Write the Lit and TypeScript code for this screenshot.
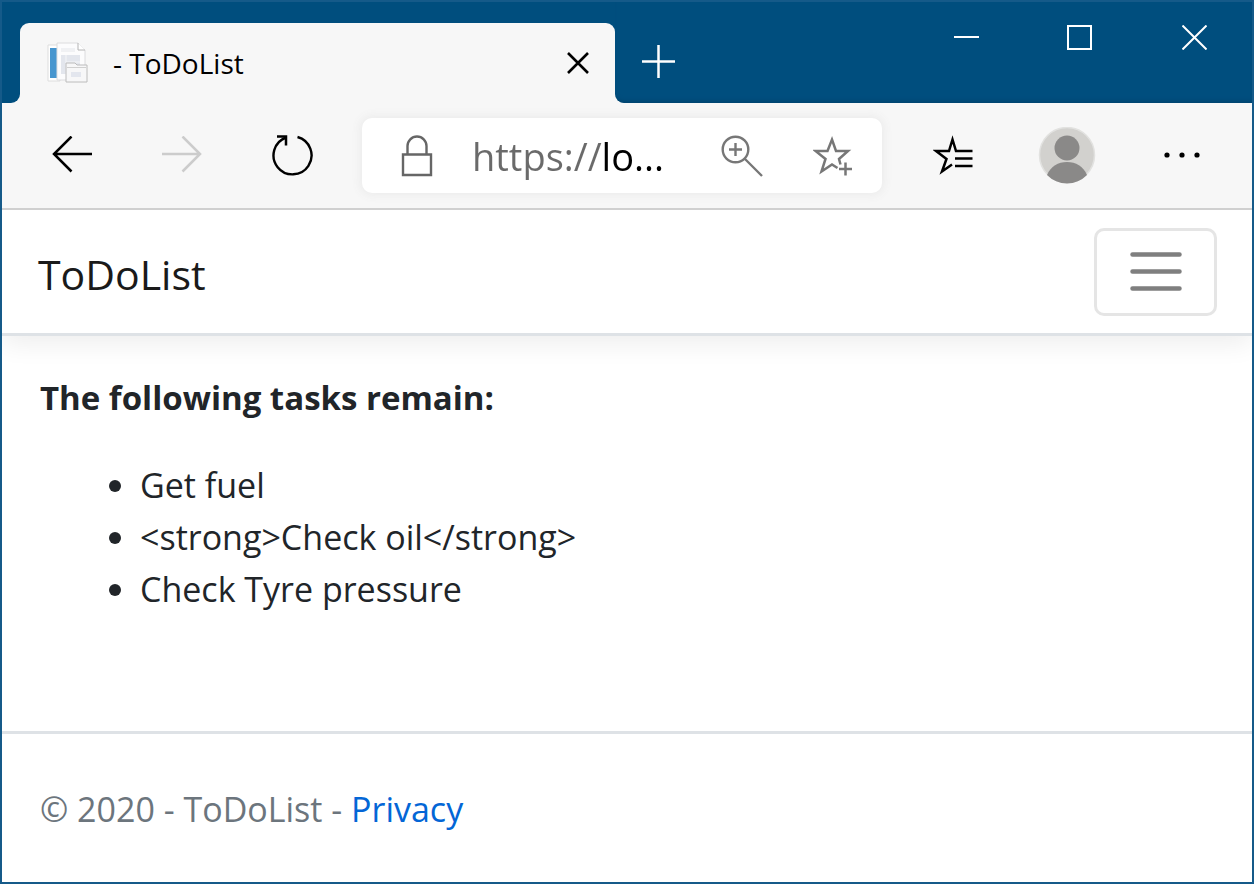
import { LitElement, html, css } from "lit";
import { customElement, state } from "lit/decorators.js";

@customElement("browser-chrome")
class BrowserChrome extends LitElement {
  static styles = css`
    :host { display: block; background: #f7f7f7; border-bottom: 2px solid #d0d0d0; }
    button { border: 0; margin: 0; padding: 0; background: none; display: flex; align-items: center; justify-content: center; }
    svg { display: block; }
    .titlebar { display: flex; height: 101px; }
    .edge { width: 18px; background: #004e7e; border-radius: 0 0 9px 0; }
    .tab-slot { flex: 0 1 595px; min-width: 0; display: flex; background: #004e7e; padding-top: 21px; box-sizing: border-box; }
    .tab { flex: 1; display: flex; align-items: center; background: #f7f7f7; border-radius: 9px 9px 0 0; padding: 0 26px; }
    .tab-title { flex: 1; margin-left: 25px; font-size: 28px; line-height: 40px; color: #000; white-space: nowrap; }
    .rest { flex: 1; display: flex; align-items: flex-start; background: #004e7e; border-radius: 0 0 0 9px; box-shadow: inset 0 -5px 5px -4px #00416a; }
    .new-tab { width: 86px; height: 80px; margin-top: 19px; }
    .controls { display: flex; margin-left: auto; }
    .controls button { width: 115px; height: 71px; }
    .toolbar { display: flex; align-items: center; height: 105px; padding: 0 14px 0 15px; }
    .nav { width: 110px; height: 75px; }
    .tool { width: 114px; height: 75px; }
    .address { flex: 1; min-width: 0; display: flex; align-items: center; height: 75px; margin: 0 14px 0 15px; padding: 0 24px 0 38px; box-sizing: border-box; background: #fff; border-radius: 10px; box-shadow: 0 0 10px 2px #ebebeb; }
    .url { flex: 1; min-width: 0; margin: 0 20px 0 38px; padding: 0; border: 0; outline: 0; font: 38px/56px "Open Sans", "Noto Sans", sans-serif; height: 56px; color: transparent; background: linear-gradient(90deg, #6a6a6a 130px, #000 130px); -webkit-background-clip: text; background-clip: text; }
    .inner { width: 91px; height: 60px; flex: none; }
    .inner + .inner { width: 51px; margin-left: 20px; }
  `;

  render() {
    return html`
      <div class="titlebar">
        <div class="edge"></div>
        <div class="tab-slot">
          <div class="tab">
            <svg width="42" height="42" viewBox="0 0 42 42" aria-hidden="true">
              <path d="M2 3H14V39H2Z" fill="#fff" stroke="#ddd" />
              <path d="M4 6H12V36H4Z" fill="#4796cf" />
              <path d="M11 1H32L39 8V38H11Z" fill="#fcfcfd" stroke="#dcdcde" />
              <path d="M32 1V8H39" fill="#fff" stroke="#b4b4b4" />
              <path d="M15 7H29M15 9H29" stroke="#e4e6ea" />
              <path d="M15 13H34V32H15Z" fill="#e3e6ed" />
              <path d="M20 13V32M20 20H34" stroke="#f5f6f8" />
              <path d="M20 21H29L31 23H41V40H20Z" fill="#f7f7f8" stroke="#bcbcbc" />
              <path d="M21 25.500H40" stroke="#d0d0d0" />
              <path d="M25 30H35V35H25Z" fill="#e3e6ee" />
            </svg>
            <span class="tab-title">- ToDoList</span>
            <button aria-label="Close tab">
              <svg width="22" height="22" viewBox="0 0 22 22"><path d="M1 1L21 21M21 1L1 21" stroke="#000" stroke-width="2.600" /></svg>
            </button>
          </div>
        </div>
        <div class="rest">
          <button class="new-tab" aria-label="New tab">
            <svg width="33" height="33" viewBox="0 0 33 33"><path d="M0 16.500H33M16.500 0V33" stroke="#fff" stroke-width="2.500" /></svg>
          </button>
          <div class="controls">
            <button aria-label="Minimize"><svg width="25" height="25" viewBox="0 0 25 25" overflow="visible"><path d="M2 12H27" stroke="#fff" stroke-width="2" /></svg></button>
            <button aria-label="Maximize"><svg width="25" height="25" viewBox="0 0 25 25"><path d="M1 1H24V24H1Z" fill="none" stroke="#fff" stroke-width="2" /></svg></button>
            <button aria-label="Close window"><svg width="25" height="25" viewBox="0 0 25 25"><path d="M.500 .500L24.500 24.500M24.500 .500L.500 24.500" stroke="#fff" stroke-width="2" /></svg></button>
          </div>
        </div>
      </div>
      <div class="toolbar">
        <button class="nav" aria-label="Back"><svg width="40" height="40" viewBox="0 0 40 40"><path d="M40 18H2M19.500 .500L2 18L19.500 35.500" fill="none" stroke="#000" stroke-width="2.500" /></svg></button>
        <button class="nav" aria-label="Forward" disabled><svg width="40" height="40" viewBox="0 0 40 40"><path d="M0 18H38M20.500 .500L38 18L20.500 35.500" fill="none" stroke="#ccc" stroke-width="2.500" /></svg></button>
        <button class="nav" aria-label="Refresh"><svg width="42" height="42" viewBox="0 0 42 42"><path d="M26.500 2A19 19 0 1 1 15 2.500" fill="none" stroke="#000" stroke-width="2.400" /><path d="M6 1.500H15V10.500" fill="none" stroke="#000" stroke-width="2.500" /></svg></button>
        <div class="address">
          <svg width="34" height="42" viewBox="0 0 34 42" aria-hidden="true"><path d="M3 19.500H31V40H3ZM7.500 19V11A9.500 9.500 0 0 1 26.500 11V19" fill="none" stroke="#666" stroke-width="2.400" /></svg>
          <input class="url" type="text" aria-label="Address" value="https://lo..." />
          <button class="inner" aria-label="Zoom"><svg width="42" height="42" viewBox="0 0 42 42"><circle cx="14.500" cy="14.500" r="12.800" fill="none" stroke="#777" stroke-width="2.400" /><path d="M24 24L41 41M8 14.500H21M14.500 8V21" stroke="#777" stroke-width="2.400" /></svg></button>
          <button class="inner" aria-label="Add to favorites"><svg width="40" height="42" viewBox="0 0 40 42"><path d="M24.500 33L19 29.500L8.500 36.500L12.500 24L2.500 16H14.500L19 4.500L23 16H35L26 24L27.500 29.500" fill="none" stroke="#777" stroke-width="2.500" /><path d="M26 34H39M32.500 27.500V40.500" stroke="#777" stroke-width="2.500" /></svg></button>
        </div>
        <button class="tool" aria-label="Favorites"><svg width="40" height="42" viewBox="0 0 40 42"><path d="M39.500 16H23L19.500 4.500L16 16H3L13.500 24L9 36.500L19 29.500" fill="none" stroke="#000" stroke-width="2.500" /><path d="M22 23.500H39.500M22 31H39.500" stroke="#000" stroke-width="2.500" /></svg></button>
        <button class="tool" aria-label="Profile"><svg width="58" height="58" viewBox="0 1 58 58"><circle cx="29" cy="29" r="27.500" fill="#d2d1ce" stroke="#e2e2e0" stroke-width="1.500" /><circle cx="29" cy="22" r="12.500" fill="#8a8988" /><path d="M9 49C13 40 20 36 29 36S45 40 49 49A28 28 0 0 1 9 49Z" fill="#8a8988" /></svg></button>
        <button class="tool" aria-label="Settings and more"><svg width="38" height="8" viewBox="0 0 38 8"><circle cx="5" cy="3" r="2.600" /><circle cx="20" cy="3" r="2.600" /><circle cx="35" cy="3" r="2.600" /></svg></button>
      </div>
    `;
  }
}

@customElement("app-root")
class AppRoot extends LitElement {
  static styles = css`
    :host { display: flex; flex-direction: column; box-sizing: border-box; min-height: 100vh; border: 2px solid #155a89; background: #fff; color: #212529; font-family: "Open Sans", "Noto Sans", sans-serif; font-size: 34px; line-height: 52px; }
    a { text-decoration: none; }
    .navbar { display: flex; align-items: center; justify-content: space-between; padding: 18px 35px 17px 36px; border-bottom: 3px solid #dee2e6; box-shadow: 0 8px 24px #00000012; clip-path: inset(0 0 -40px 0); }
    .brand { font-size: 41px; line-height: 64px; padding-top: 4px; color: #1a1a1a; }
    .toggler { display: flex; align-items: center; justify-content: center; width: 123px; height: 88px; padding: 0; background: #fff; border: 3px solid #e5e5e5; border-radius: 10px; }
    main { flex: 1; padding: 36px 38px; }
    p { margin: 0; font-size: 33px; font-weight: 700; }
    ul { margin: 35px 0 0; padding: 0 0 0 100px; }
    footer { padding: 49px 38px 47px; border-top: 3px solid #dee2e6; color: #6c757d; }
    footer a { color: #0366d6; }
  `;

  @state() private tasks = ["Get fuel", "<strong>Check oil</strong>", "Check Tyre pressure"];

  render() {
    return html`
      <browser-chrome></browser-chrome>
      <header class="navbar">
        <a class="brand" href="#">ToDoList</a>
        <button class="toggler" aria-label="Toggle navigation">
          <svg width="54" height="42" viewBox="0 0 54 42"><path d="M3.500 3.500H50.500M3.500 20.500H50.500M3.500 37.500H50.500" stroke="#7f7f7f" stroke-width="4.500" stroke-linecap="round" /></svg>
        </button>
      </header>
      <main>
        <p>The following tasks remain:</p>
        <ul>${this.tasks.map((task) => html`<li>${task}</li>`)}</ul>
      </main>
      <footer>&copy; 2020 - ToDoList - <a href="#">Privacy</a></footer>
    `;
  }
}
